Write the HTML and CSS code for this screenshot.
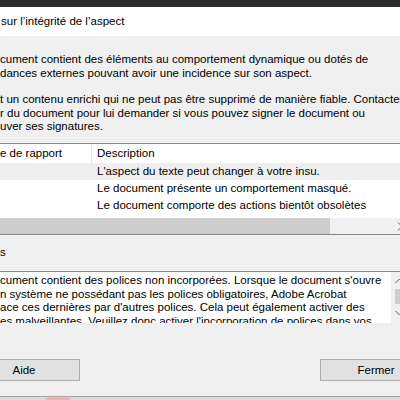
FILE: index.html
```html
<!DOCTYPE html>
<html lang="fr">
<head>
    <meta charset="UTF-8">
    <title>Rapport sur l'intégrité de l'aspect</title>
    <link rel="stylesheet" href="styles.css">
</head>
<body>
    <!--barre de l'application derrière la fenêtre-->
    <div class="app-bar">
        <span class="app-search">Rechercher du texte ou des outils</span>
    </div>

    <div class="dialog">
        <!--titre-->
        <div class="dialog-title">sur l’intégrité de l’aspect</div>

        <div class="dialog-body">
            <p class="intro">cument contient des éléments au comportement dynamique ou dotés de<br>dances externes pouvant avoir une incidence sur son aspect.</p>
            <p class="intro">t un contenu enrichi qui ne peut pas être supprimé de manière fiable. Contactez<br>r du document pour lui demander si vous pouvez signer le document ou<br>uver ses signatures.</p>

            <!--liste des éléments du rapport-->
            <div class="report">
                <div class="report-row report-head">
                    <span class="col-type">e de rapport</span>
                    <span class="col-desc">Description</span>
                </div>
                <div class="report-row active">
                    <span class="col-type"></span>
                    <span class="col-desc">L'aspect du texte peut changer à votre insu.</span>
                </div>
                <div class="report-row">
                    <span class="col-type"></span>
                    <span class="col-desc">Le document présente un comportement masqué.</span>
                </div>
                <div class="report-row">
                    <span class="col-type"></span>
                    <span class="col-desc">Le document comporte des actions bientôt obsolètes</span>
                </div>
                <div class="hscroll">
                    <span class="hscroll-thumb"></span>
                    <span class="hscroll-arrow">
                        <svg width="6" height="9" viewBox="0 0 6 9"><path d="M1 0.5 L5 4.5 L1 8.5" fill="none" stroke="#606060" stroke-width="1"/></svg>
                    </span>
                </div>
            </div>

            <div class="details-label">s</div>

            <!--détails de l'élément sélectionné-->
            <div class="details">
                <div class="details-text">cument contient des polices non incorporées. Lorsque le document s'ouvre<br>n système ne possédant pas les polices obligatoires, Adobe Acrobat<br>ace ces dernières par d'autres polices. Cela peut également activer des<br>es malveillantes. Veuillez donc activer l'incorporation de polices dans vos</div>
                <div class="vscroll">
                    <span class="vscroll-arrow">
                        <svg width="9" height="6" viewBox="0 0 9 6"><path d="M0.5 5 L4.5 1 L8.5 5" fill="none" stroke="#606060" stroke-width="1"/></svg>
                    </span>
                    <span class="vscroll-thumb"></span>
                    <span class="vscroll-arrow">
                        <svg width="9" height="6" viewBox="0 0 9 6"><path d="M0.5 1 L4.5 5 L8.5 1" fill="none" stroke="#606060" stroke-width="1"/></svg>
                    </span>
                </div>
            </div>

            <!--boutons-->
            <div class="actions">
                <button class="btn btn-help">Aide</button>
                <button class="btn btn-close">Fermer</button>
            </div>
        </div>
    </div>

    <div class="desk"><span class="desk-mark"></span></div>
</body>
</html>
```

FILE: styles.css
```css
* {
    margin: 0;
    padding: 0;
    box-sizing: border-box;
}
html, body {
    width: 400px;
    height: 400px;
    overflow: hidden;
}
body {
    font-family: "Liberation Sans", Arial, sans-serif;
    font-size: 11.5px;
    color: #000;
    background: #f0f0f0;
}

.app-bar {
    height: 7px;
    overflow: hidden;
    background: #2b2b2b;
    white-space: nowrap;
}
.app-search {
    display: block;
    margin-top: -12px;
    padding-left: 258px;
    font-size: 15px;
    line-height: 14px;
    color: #5a5a5a;
}

.dialog {
    background: #f0f0f0;
}
.dialog-title {
    height: 29px;
    padding-left: 1px;
    line-height: 29px;
    background: #fff;
}
.dialog-body {
    padding-top: 17px;
}

.intro {
    line-height: 13.5px;
    white-space: nowrap;
}
.intro + .intro {
    margin-top: 13px;
}

.report {
    margin-top: 9.5px;
    margin-right: -8px;
    background: #fff;
    border-top: 1px solid #828790;
    border-bottom: 1px solid #828790;
}
.report-row {
    display: flex;
    height: 17px;
    line-height: 17px;
    white-space: nowrap;
}
.report-head {
    height: 19px;
    line-height: 19px;
}
.report-row.active {
    background: #efefef;
}
.col-type {
    width: 92px;
    flex: none;
}
.report-head .col-type {
    border-right: 1px solid #e5e5e5;
}
.col-desc {
    padding-left: 5px;
}
.hscroll {
    display: flex;
    height: 16px;
    margin-top: 4px;
    background: #f0f0f0;
}
.hscroll-thumb {
    width: 330px;
    background: #cdcdcd;
}
.hscroll-arrow {
    display: flex;
    align-items: center;
    justify-content: center;
    width: 17px;
    margin-left: auto;
}

.details-label {
    height: 36px;
    padding-top: 11px;
    line-height: 13px;
}

.details {
    display: flex;
    height: 52px;
    margin-right: -8px;
    background: #fff;
    border-top: 1px solid #828790;
    overflow: hidden;
}
.details-text {
    flex: 1;
    padding-top: 2px;
    line-height: 13.5px;
    white-space: nowrap;
    overflow: hidden;
}
.vscroll {
    display: flex;
    flex-direction: column;
    align-items: center;
    width: 17px;
    flex: none;
    background: #f0f0f0;
}
.vscroll-arrow {
    display: flex;
    align-items: center;
    justify-content: center;
    height: 17px;
}
.vscroll-thumb {
    width: 9px;
    height: 15px;
    background: #cdcdcd;
}

.actions {
    display: flex;
    justify-content: space-between;
    margin: 36px -32px 0;
    height: 37px;
}
.btn {
    width: 112px;
    height: 22px;
    font-family: "Liberation Sans", Arial, sans-serif;
    font-size: 11.5px;
    color: #000;
    background: #e1e1e1;
    border: 1px solid #adadad;
}

.desk {
    height: 4px;
    border-top: 1px solid #a0a0a0;
    background: #dcdcdc;
}
.desk-mark {
    display: block;
    width: 24px;
    height: 4px;
    margin-left: 46px;
    background: #e8b0b0;
    filter: blur(1px);
}
```
